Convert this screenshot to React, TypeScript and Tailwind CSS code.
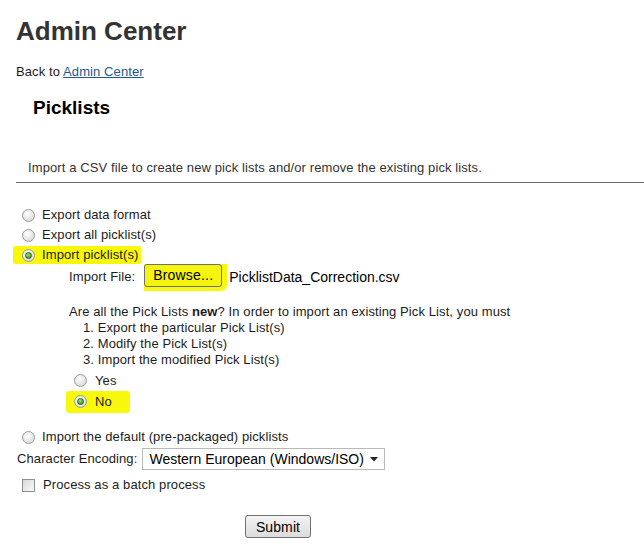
function Radio({ checked = false }: { checked?: boolean }) {
  return (
    <span className="flex size-[13px] shrink-0 items-center justify-center rounded-full border border-[#9a9a9a] bg-[radial-gradient(circle_at_40%_35%,#ffffff,#d0d0d0)]">
      {checked && (
        <span className="size-[7px] rounded-full border border-[#2c5f1e] bg-[radial-gradient(circle_at_40%_35%,#9be870,#227a14)]" />
      )}
    </span>
  );
}

export default function App() {
  return (
    <div className="relative h-[550px] w-[644px] overflow-hidden bg-white font-['Liberation_Sans',Arial,sans-serif] text-[13px] leading-4 tracking-[0.1px] text-[#1c1c1c]">
      <h1 className="ml-4 mt-4 text-[26px] font-bold leading-[30px] tracking-normal text-[#333]">Admin Center</h1>

      <p className="ml-4 mt-[18px]">
        Back to <a className="text-[#1b5a92] underline">Admin Center</a>
      </p>

      <h2 className="ml-[33px] mt-4 text-[19px] font-bold leading-6 tracking-normal text-black">Picklists</h2>

      <p className="ml-[28px] mt-[40px] text-[#333]">
        Import a CSV file to create new pick lists and/or remove the existing pick lists.
      </p>
      <div className="ml-4 mt-[6px] border-t border-[#6a6a6a]" />

      {/* options */}
      <div className="mt-[22px] flex flex-col">
        <label className="flex h-5 items-center pl-[22px]">
          <Radio />
          <span className="ml-[7px]">Export data format</span>
        </label>
        <label className="flex h-5 items-center pl-[22px]">
          <Radio />
          <span className="ml-[7px]">Export all picklist(s)</span>
        </label>
        <div className="flex h-5 items-center">
          <label className="ml-[13px] flex h-[18px] w-[128px] items-center rounded-[2px] bg-[#f8f80c] pl-[9px]">
            <Radio checked />
            <span className="ml-[7px]">Import picklist(s)</span>
          </label>
        </div>

        <div className="flex h-6 items-center pl-[69px]">
          <span>Import File:</span>
          <span className="ml-[9px] flex h-[27px] items-start rounded-br-[6px] bg-[#f8f80c] pr-[5px]">
            <button className="h-[23px] w-[78px] rounded-[3px] border border-[#707070] bg-[#f4f40e] text-[14px] leading-none tracking-[0.2px] text-black">
              Browse...
            </button>
          </span>
          <span className="ml-[2px] text-[14px] tracking-normal text-black">PicklistData_Correction.csv</span>
        </div>

        <div className="ml-[69px] mt-[15px]">
          <p>
            Are all the Pick Lists <b>new</b>? In order to import an existing Pick List, you must
          </p>
          <ol className="ml-[14px]">
            <li>1. Export the particular Pick List(s)</li>
            <li>2. Modify the Pick List(s)</li>
            <li>3. Import the modified Pick List(s)</li>
          </ol>
          <label className="mt-[2px] flex h-[21px] items-center pl-[5px]">
            <Radio />
            <span className="ml-[8px]">Yes</span>
          </label>
          <div className="flex h-[21px] items-center">
            <label className="-ml-[3px] flex h-[22px] w-[64px] items-center rounded-[3px] bg-[#f8f80c] pl-[8px]">
              <Radio checked />
              <span className="ml-[8px]">No</span>
            </label>
          </div>
        </div>

        <label className="mt-[15px] flex h-5 items-center pl-[22px]">
          <Radio />
          <span className="ml-[7px]">Import the default (pre-packaged) picklists</span>
        </label>

        <div className="mt-[1px] flex h-[22px] items-center pl-[17px]">
          <span>Character Encoding:</span>
          <div className="ml-[5px] flex h-[22px] w-[243px] items-center justify-between border border-[#b9b9b9] bg-white pl-[6px] pr-[6px] text-[14px] tracking-normal text-black">
            <span>Western European (Windows/ISO)</span>
            <svg width="8" height="5" viewBox="0 0 8 5">
              <path d="M0 0 H8 L4 4.5 Z" fill="#222" />
            </svg>
          </div>
        </div>

        <label className="mt-[5px] flex h-5 items-center pl-[22px]">
          <span className="size-[13px] shrink-0 border border-[#8f8f8f] bg-gradient-to-br from-[#d8d8d8] to-[#fbfbfb]" />
          <span className="ml-[8px]">Process as a batch process</span>
        </label>

        <div className="mt-[20px] pl-[245px]">
          <button className="h-[23px] w-[66px] rounded-[3px] border border-[#707070] bg-gradient-to-b from-[#f4f4f4] to-[#dcdcdc] text-[14px] leading-none text-black">
            Submit
          </button>
        </div>
      </div>
    </div>
  );
}
